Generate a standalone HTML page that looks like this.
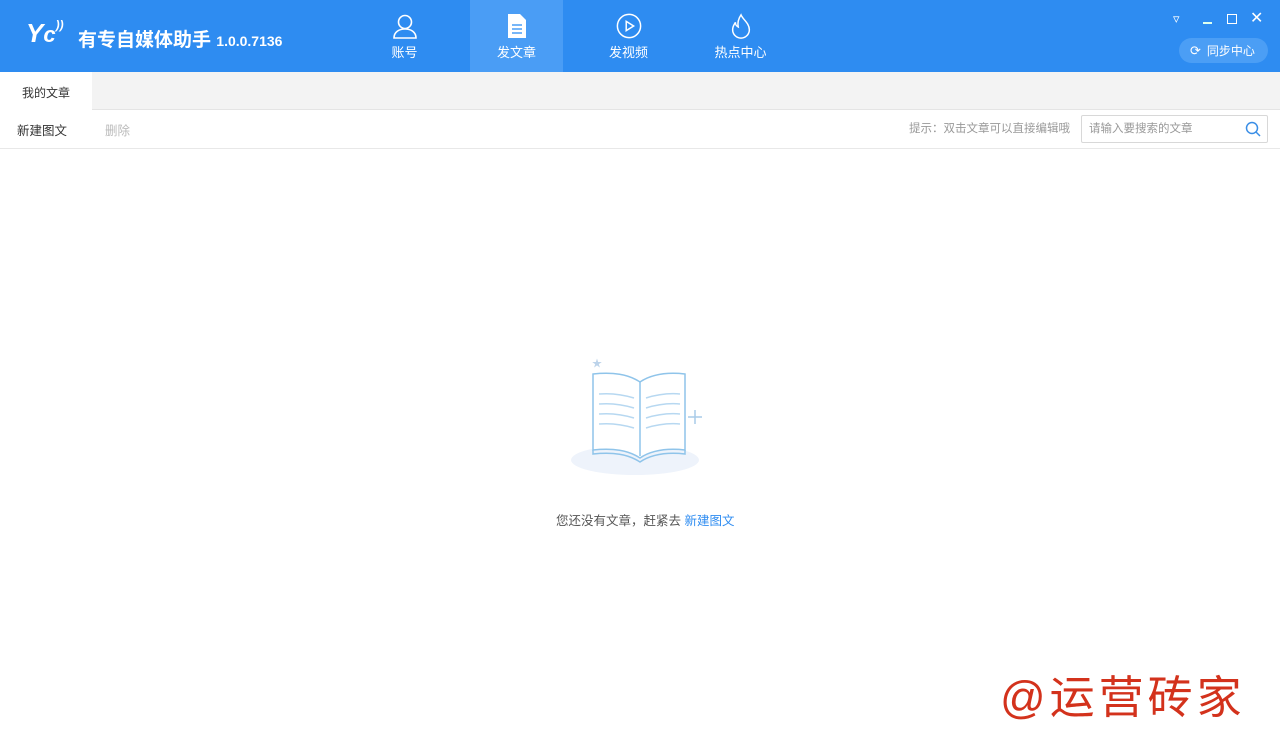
<!DOCTYPE html>
<html><head><meta charset="utf-8"><style>
body{margin:0;width:1280px;height:745px;overflow:hidden;background:#fff;font-family:"Liberation Sans","Noto Sans CJK SC",sans-serif;position:relative}
.hdr{position:absolute;left:0;top:0;width:1280px;height:72px;background:#2e8cf1}
.logo{position:absolute;left:26px;top:18px;color:#fff;font-size:26px;font-weight:bold;font-style:italic}
.title{position:absolute;left:78px;top:25px;color:#fff;font-size:19px;font-weight:bold}
.title span{font-size:14px}
.nav{position:absolute;top:0;height:72px;width:93px;color:#fff;font-size:13px;text-align:center}
.nav svg{display:block;margin:13px auto 3px}
.nav.act{background:#4a9df5}
.tabbar{position:absolute;top:72px;left:0;width:1280px;height:37px;background:#f3f3f3;border-bottom:1px solid #e4e4e4}
.tab{position:absolute;left:0;top:0;width:92px;height:38px;background:#fff;font-size:12px;color:#333;line-height:42px;text-align:center}
.tool{position:absolute;top:110px;left:0;width:1280px;height:38px;border-bottom:1px solid #e8e8e8;font-size:12.5px}
.sync{position:absolute;left:1179px;top:38px;width:89px;height:25px;border-radius:13px;background:#4b9ef5;color:#fff;font-size:12px;line-height:25px}
</style></head><body>
<div class="hdr">
<div class="logo">Y<span style="font-size:22px">c</span><span style="font-size:12px;vertical-align:top">))</span></div>
<div class="title">有专自媒体助手 <span>1.0.0.7136</span></div>
<div class="nav" style="left:358px"><svg width="26" height="26" viewBox="0 0 26 26" fill="none" stroke="#fff" stroke-width="1.6"><circle cx="13" cy="9" r="6.5"/><path d="M2 25c0-6 5-9 11-9s11 3 11 9z"/></svg>账号</div>
<div class="nav act" style="left:470px"><svg width="26" height="26" viewBox="0 0 26 26"><path d="M4 1h12l6 6v18H4z" fill="#fff"/><path d="M8 12h10M8 16h10M8 20h10" stroke="#4a9df5" stroke-width="1.6"/></svg>发文章</div>
<div class="nav" style="left:582px"><svg width="26" height="26" viewBox="0 0 28 28" fill="none" stroke="#fff" stroke-width="1.6"><circle cx="14" cy="14" r="12.5"/><path d="M11 9v10l8-5z"/></svg>发视频</div>
<div class="nav" style="left:694px"><svg width="26" height="26" viewBox="0 0 28 28" fill="none" stroke="#fff" stroke-width="1.6"><path d="M14 2c2 5 9 9 9 16a9 9 0 0 1-18 0c0-4 2-6 3-8 0 3 1 4 3 5-1-5 1-10 3-13z"/></svg>热点中心</div>
<div style="position:absolute;left:1173px;top:11px;color:#fff;font-size:13px">▿</div>
<div style="position:absolute;left:1203px;top:22px;width:9px;height:1.5px;background:#dfe"></div>
<div style="position:absolute;left:1227px;top:14px;width:8px;height:8px;border:1.3px solid #fff"></div>
<div style="position:absolute;left:1250px;top:8px;color:#fff;font-size:16px">✕</div>
<div class="sync"><span style="margin:0 6px 0 11px;font-size:13px">⟳</span>同步中心</div>
</div>
<div class="tabbar"><div class="tab">我的文章</div></div>
<div class="tool">
<span style="position:absolute;left:17px;top:10px;color:#333">新建图文</span>
<span style="position:absolute;left:105px;top:10px;color:#bbb">删除</span>
<span style="position:absolute;left:909px;top:10px;color:#999;font-size:11.5px">提示：双击文章可以直接编辑哦</span>
<div style="position:absolute;left:1081px;top:5px;width:185px;height:26px;border:1px solid #d8d8d8;border-radius:2px;font-size:11.5px;color:#999;line-height:26px;text-indent:7px">请输入要搜索的文章
<svg style="position:absolute;right:6px;top:5px" width="16" height="16" viewBox="0 0 16 16" fill="none" stroke="#3a8ee6" stroke-width="1.5"><circle cx="7" cy="7" r="5.5"/><path d="M11 11l4 4"/></svg></div>
</div>
<svg style="position:absolute;left:565px;top:352px" width="150" height="130" viewBox="0 0 150 130" fill="none" stroke="#8fc4ea" stroke-width="1.5">
<ellipse cx="70" cy="108" rx="64" ry="15" fill="#eef3fb" stroke="none"/>
<text x="27" y="15" fill="#bcd3ea" stroke="none" font-size="10">★</text>
<path d="M130 58v14M123 65h14" stroke="#a9cbe8"/>
<path d="M28 22c20-2 35 0 47 8 12-8 27-10 45-8v76c-18-2-33 0-45 8-12-8-27-10-47-8z" fill="#fff"/>
<path d="M75 30v74"/>
<path d="M28 98v4c20-2 35 0 47 8 12-8 27-10 45-8v-4"/>
<path d="M34 42c12-1 22 0 35 4M34 52c12-1 22 0 35 4M34 62c12-1 22 0 35 4M34 72c12-1 22 0 35 4M81 46c13-4 23-5 34-4M81 56c13-4 23-5 34-4M81 66c13-4 23-5 34-4M81 76c13-4 23-5 34-4" stroke="#b7d8f1"/>
</svg>
<div style="position:absolute;left:556px;top:510px;font-size:12.5px;color:#555">您还没有文章，赶紧去 <span style="color:#2e8cf1">新建图文</span></div>
<div style="position:absolute;left:1000px;top:661px;font-size:45px;color:#d3321c;letter-spacing:4px;white-space:nowrap">@运营砖家</div>
</body></html>
